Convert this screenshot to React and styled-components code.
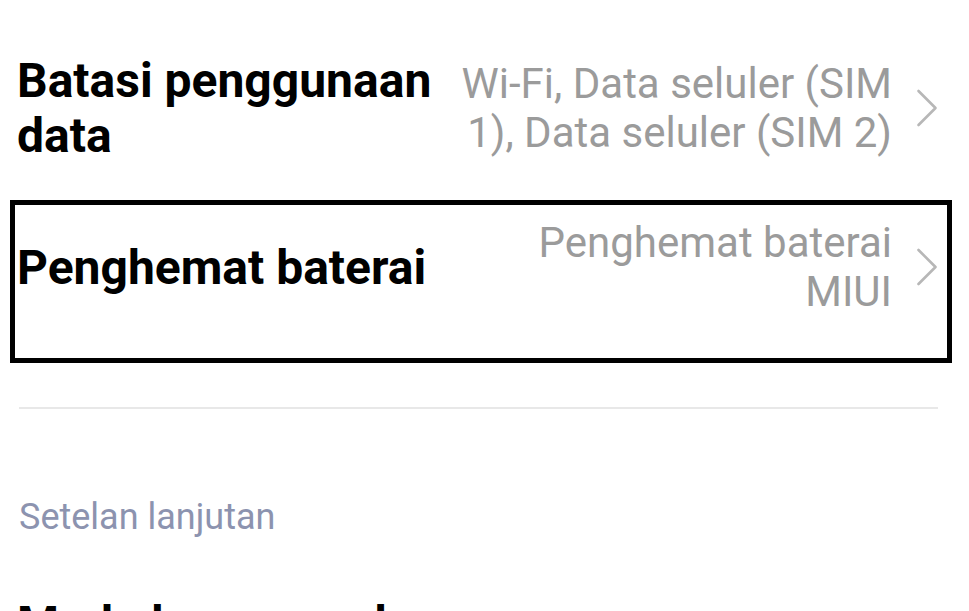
import React from "react";
import styled, { createGlobalStyle } from "styled-components";

const Global = createGlobalStyle`
  html, body {
    margin: 0;
    padding: 0;
    background: #ffffff;
    overflow: hidden;
  }
  body {
    font-family: Roboto, "Noto Sans", "Liberation Sans", sans-serif;
    -webkit-font-smoothing: antialiased;
  }
`;

const Page = styled.div`
  width: 969px;
  height: 611px;
  overflow: hidden;
  box-sizing: border-box;
  padding: 28px 31px 0 17px;
  display: flex;
  flex-direction: column;
  & > * {
    flex-shrink: 0;
  }
`;

const Row = styled.div`
  display: flex;
  align-items: center;
  height: ${(p) => p.$height}px;
  gap: 20px;
`;

const Title = styled.div`
  flex: 1;
  min-width: 0;
  font-size: 48px;
  line-height: 55px;
  font-weight: 700;
  color: #000000;
`;

const Value = styled.div`
  max-width: 437px;
  text-align: right;
  font-size: 42px;
  line-height: 49px;
  font-weight: 400;
  color: #9b9b9b;
`;

const Chevron = styled.svg`
  flex: none;
  width: 22px;
  height: 38px;
  margin-left: 4px;
`;

const Highlight = styled.div`
  margin: 12px -14px 0 -7px;
  border: 5px solid #000000;
  padding: 0 9px 29px 2px;
`;

const Divider = styled.div`
  margin-top: 44px;
  height: 2px;
  background: #e8e8e8;
  margin-left: 2px;
`;

const SectionHeader = styled.div`
  margin-top: 87px;
  padding-left: 2px;
  font-size: 36px;
  line-height: 43px;
  color: #8c93af;
`;

const CutTitle = styled(Title)`
  flex: none;
  margin-top: 57px;
  white-space: nowrap;
`;

const Arrow = () => (
  <Chevron viewBox="0 0 22 38" fill="none">
    <polyline
      points="2.5,2 19.5,19 2.5,36"
      stroke="#b7b7b7"
      strokeWidth="2.6"
      strokeLinecap="round"
      strokeLinejoin="round"
    />
  </Chevron>
);

const SettingRow = ({ title, value, height }) => (
  <Row $height={height}>
    <Title>{title}</Title>
    <Value>{value}</Value>
    <Arrow />
  </Row>
);

export default function App() {
  return (
    <>
      <Global />
      <Page>
        <SettingRow
          height={160}
          title="Batasi penggunaan data"
          value="Wi-Fi, Data seluler (SIM 1), Data seluler (SIM 2)"
        />
        <Highlight>
          <SettingRow
            height={124}
            title="Penghemat baterai"
            value="Penghemat baterai MIUI"
          />
        </Highlight>
        <Divider />
        <SectionHeader>Setelan lanjutan</SectionHeader>
        <CutTitle>Mode layar penuh</CutTitle>
      </Page>
    </>
  );
}
